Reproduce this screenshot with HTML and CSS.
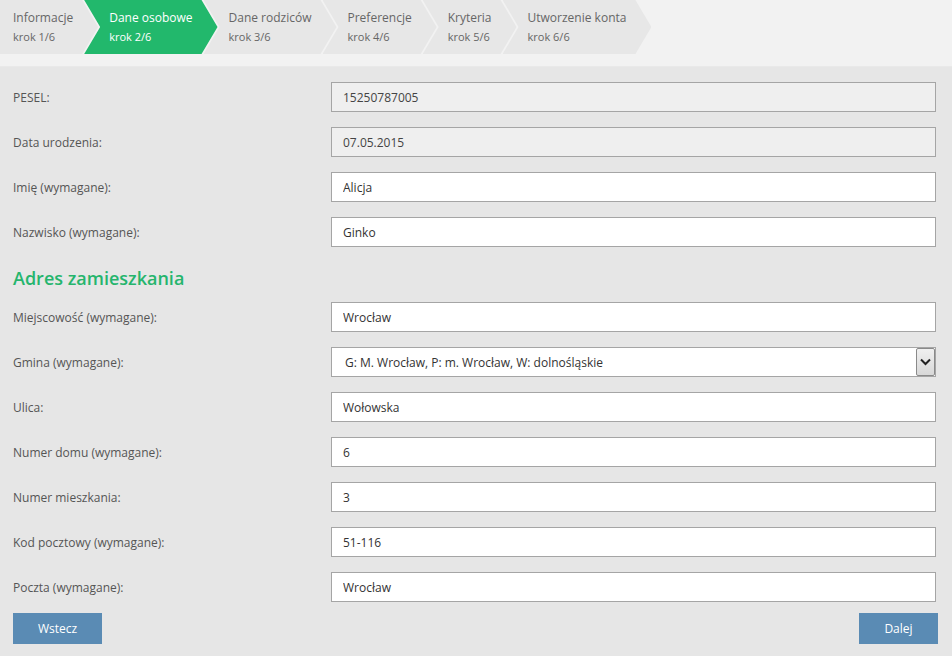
FILE: index.html
```html
<!DOCTYPE html>
<html lang="pl">
<head>
<meta charset="utf-8">
<title>Dane osobowe</title>
<link rel="stylesheet" href="styles.css">
</head>
<body>
<header class="header">
  <nav class="steps">
    <div class="step step-first"><span class="step-title">Informacje</span><span class="step-sub">krok 1/6</span></div>
    <div class="step step-active"><span class="step-title">Dane osobowe</span><span class="step-sub">krok 2/6</span></div>
    <div class="step"><span class="step-title">Dane rodziców</span><span class="step-sub">krok 3/6</span></div>
    <div class="step"><span class="step-title">Preferencje</span><span class="step-sub">krok 4/6</span></div>
    <div class="step"><span class="step-title">Kryteria</span><span class="step-sub">krok 5/6</span></div>
    <div class="step"><span class="step-title">Utworzenie konta</span><span class="step-sub">krok 6/6</span></div>
  </nav>
</header>
<main class="content">
  <form class="form">
    <div class="row"><label class="label">PESEL:</label><input class="field" type="text" value="15250787005" disabled></div>
    <div class="row"><label class="label">Data urodzenia:</label><input class="field" type="text" value="07.05.2015" disabled></div>
    <div class="row"><label class="label">Imię (wymagane):</label><input class="field" type="text" value="Alicja"></div>
    <div class="row"><label class="label">Nazwisko (wymagane):</label><input class="field" type="text" value="Ginko"></div>
    <h2 class="section-title">Adres zamieszkania</h2>
    <div class="row"><label class="label">Miejscowość (wymagane):</label><input class="field" type="text" value="Wrocław"></div>
    <div class="row"><label class="label">Gmina (wymagane):</label>
      <div class="select-wrap">
        <select class="field select"><option>G: M. Wrocław, P: m. Wrocław, W: dolnośląskie</option></select>
        <span class="select-arrow"><svg width="11" height="8" viewBox="0 0 11 8"><path d="M1 1.5 L5.5 6 L10 1.5" fill="none" stroke="#222" stroke-width="2"/></svg></span>
      </div>
    </div>
    <div class="row"><label class="label">Ulica:</label><input class="field" type="text" value="Wołowska"></div>
    <div class="row"><label class="label">Numer domu (wymagane):</label><input class="field" type="text" value="6"></div>
    <div class="row"><label class="label">Numer mieszkania:</label><input class="field" type="text" value="3"></div>
    <div class="row"><label class="label">Kod pocztowy (wymagane):</label><input class="field" type="text" value="51-116"></div>
    <div class="row"><label class="label">Poczta (wymagane):</label><input class="field" type="text" value="Wrocław"></div>
    <div class="actions">
      <button type="button" class="btn">Wstecz</button>
      <button type="button" class="btn">Dalej</button>
    </div>
  </form>
</main>
</body>
</html>
```

FILE: styles.css
```css
* { box-sizing: border-box; }
html, body { margin: 0; padding: 0; }
body {
  font-family: "Open Sans", "Noto Sans", "DejaVu Sans", sans-serif;
  font-size: 12px;
  color: #555;
  background: #e6e6e6;
  width: 952px;
  height: 656px;
  overflow: hidden;
}
.header {
  background: #f2f2f2;
  height: 67px;
  border-bottom: 1px solid #e9e9e9;
}
.steps {
  display: flex;
  height: 54px;
}
.step {
  display: flex;
  flex-direction: column;
  justify-content: center;
  height: 54px;
  padding: 0 25px 0 25px;
  margin-left: -14px;
  background: #e7e7e7;
  color: #666;
  clip-path: polygon(0 0, calc(100% - 16px) 0, 100% 50%, calc(100% - 16px) 100%, 0 100%, 16px 50%);
}
.step-first {
  margin-left: 0;
  padding-left: 13px;
  clip-path: polygon(0 0, calc(100% - 16px) 0, 100% 50%, calc(100% - 16px) 100%, 0 100%);
}
.step-active {
  background: #22b86c;
  color: #fff;
}
.step-title {
  font-size: 12px;
  line-height: 18px;
  white-space: nowrap;
  margin-top: 1px;
}
.step-sub {
  font-size: 11px;
  line-height: 19px;
  white-space: nowrap;
}
.content {
  padding: 15px 16px 0 13px;
}
.form {
  display: flex;
  flex-direction: column;
}
.row {
  display: grid;
  grid-template-columns: 318px 1fr;
  align-items: center;
  height: 30px;
  margin-bottom: 15px;
}
.label {
  color: #555;
  font-size: 12px;
}
.field {
  width: 100%;
  height: 30px;
  border: 1px solid #a5a5a5;
  background: #fff;
  font-family: inherit;
  font-size: 12px;
  color: #333;
  padding: 0 11px;
  margin: 0;
  border-radius: 0;
  outline: none;
}
.field:disabled {
  background: #efefef;
  color: #444;
  -webkit-text-fill-color: #444;
  opacity: 1;
}
.select-wrap {
  position: relative;
}
.select {
  appearance: none;
  -webkit-appearance: none;
  padding-left: 13px;
}
.select-arrow {
  position: absolute;
  right: 1px;
  top: 1px;
  width: 19px;
  height: 28px;
  background: linear-gradient(#f0f0f0, #d8d8d8);
  border: 1px solid #8a8a8a;
  border-radius: 2px;
  display: flex;
  align-items: center;
  justify-content: center;
  pointer-events: none;
}
.section-title {
  margin: 3px 0 11px;
  font-size: 18px;
  line-height: 26px;
  font-weight: 600;
  color: #25b56d;
}
.actions {
  display: flex;
  justify-content: space-between;
  margin-top: -4px;
  margin-right: -2px;
}
.btn {
  height: 31px;
  min-width: 79px;
  padding: 0 25px;
  border: none;
  background: #5a8bb4;
  color: #fff;
  font-family: inherit;
  font-size: 12px;
  border-radius: 0;
}
```
